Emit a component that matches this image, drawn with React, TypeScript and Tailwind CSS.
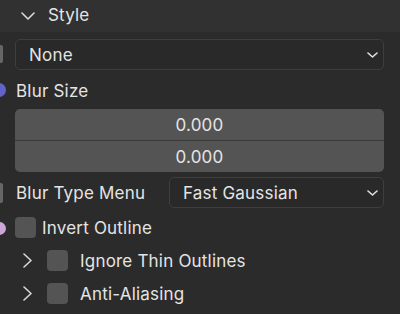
import React from "react";

const Chevron = ({ dir, className }: { dir: "down" | "right"; className?: string }) =>
  dir === "down" ? (
    <svg className={className} width="14" height="8" viewBox="0 0 14 8" fill="none">
      <path d="M1 1L7 7L13 1" stroke="#d8d8d8" strokeWidth="1.6" strokeLinecap="round" strokeLinejoin="round" />
    </svg>
  ) : (
    <svg className={className} width="9" height="15" viewBox="0 0 9 15" fill="none">
      <path d="M1 1L8 7.5L1 14" stroke="#d8d8d8" strokeWidth="1.6" strokeLinecap="round" strokeLinejoin="round" />
    </svg>
  );

const SmallChevron = () => (
  <svg width="11" height="6" viewBox="0 0 11 6" fill="none">
    <path d="M1 1L5.5 5L10 1" stroke="#e0e0e0" strokeWidth="1.6" strokeLinecap="round" strokeLinejoin="round" />
  </svg>
);

export default function App() {
  return (
    <div
      className="w-[400px] h-[314px] bg-[#2b2b2b] overflow-hidden text-[#e4e4e4] text-[17px] tracking-[0.2px] leading-none"
      style={{ fontFamily: "Inter, 'Noto Sans', sans-serif" }}
    >
      <div className="h-[32px] bg-[#313131] flex items-center pl-[21px]">
        <Chevron dir="down" />
        <span className="ml-[13px] -mt-[2px]">Style</span>
      </div>

      <div className="flex flex-col">
        {/* None dropdown */}
        <div className="relative mt-[7px] h-[31px] pl-[15px] pr-[16px] flex">
          <div className="absolute left-[-15px] top-[6px] w-[18px] h-[18px] bg-[#666666] rounded-[2px]" />
          <div className="flex-1 flex items-center justify-between rounded-[5px] border border-[#3e3e3e] bg-[#292929] pl-[13px] pr-[5px]">
            <span className="pt-[2px]">None</span>
            <SmallChevron />
          </div>
        </div>

        {/* Blur Size */}
        <div className="relative mt-[5px] h-[30px] pl-[16px] flex items-center">
          <div className="absolute left-[-8px] top-[8px] w-[14px] h-[14px] rounded-full bg-[#6363c7]" />
          <span className="pt-[2px]">Blur Size</span>
        </div>

        <div className="mt-[4px] ml-[15px] mr-[16px] h-[63px] rounded-[5px] bg-[#545454] flex flex-col overflow-hidden">
          <div className="flex-1 flex items-center justify-center border-b border-[#3a3a3a] pt-[2px]">0.000</div>
          <div className="flex-1 flex items-center justify-center pt-[2px]">0.000</div>
        </div>

        {/* Blur Type Menu */}
        <div className="relative mt-[5px] h-[31px] pl-[16px] pr-[16px] flex items-center">
          <div className="absolute left-[-15px] top-[6px] w-[18px] h-[20px] bg-[#666666] rounded-[2px]" />
          <span className="w-[153px] pt-[2px]">Blur Type Menu</span>
          <div className="flex-1 h-full flex items-center justify-between rounded-[5px] border border-[#3e3e3e] bg-[#292929] pl-[13px] pr-[5px]">
            <span className="pt-[2px]">Fast Gaussian</span>
            <SmallChevron />
          </div>
        </div>

        {/* Invert Outline */}
        <div className="relative mt-[9px] h-[21px] pl-[15px] flex items-center">
          <div className="absolute left-[-8px] top-[5px] w-[14px] h-[13px] rounded-full bg-[#cca6d6]" />
          <div className="w-[21px] h-[21px] rounded-[4px] bg-[#545454]" />
          <span className="ml-[6px] pt-[2px]">Invert Outline</span>
        </div>

        {/* Ignore Thin Outlines */}
        <div className="mt-[12px] h-[21px] pl-[23px] flex items-center">
          <Chevron dir="right" />
          <div className="ml-[15px] w-[21px] h-[21px] rounded-[4px] bg-[#545454]" />
          <span className="ml-[12px] pt-[2px]">Ignore Thin Outlines</span>
        </div>

        {/* Anti-Aliasing */}
        <div className="mt-[12px] h-[21px] pl-[23px] flex items-center">
          <Chevron dir="right" />
          <div className="ml-[15px] w-[21px] h-[21px] rounded-[4px] bg-[#545454]" />
          <span className="ml-[12px] pt-[2px]">Anti-Aliasing</span>
        </div>
      </div>
    </div>
  );
}
